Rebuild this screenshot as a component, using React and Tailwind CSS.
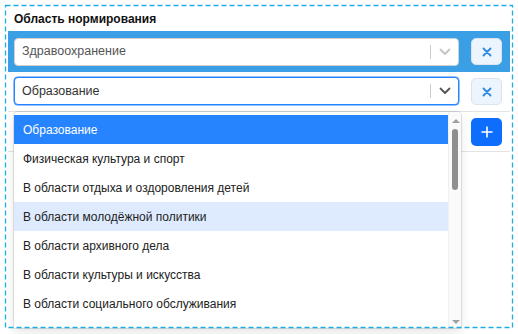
import React from "react";

function Chevron({ color }) {
  return (
    <svg width="12" height="8" viewBox="0 0 12 8" fill="none">
      <path d="M1.5 1.5 L6 6 L10.5 1.5" stroke={color} strokeWidth="1.8" strokeLinecap="round" strokeLinejoin="round" />
    </svg>
  );
}

function Select({ value, focused }) {
  return (
    <div
      className={
        "flex h-[28px] w-[445px] items-center rounded-[4px] border bg-white " +
        (focused ? "border-[#2684ff] shadow-[0_0_0_0.5px_#2684ff]" : "border-[#d0d0d0]")
      }
    >
      <div className={"flex-1 pl-[7px] " + (focused ? "text-[#333]" : "text-[#555]")}>{value}</div>
      <div className="h-[14px] w-px bg-[#cccccc]" />
      <div className="flex w-[27px] items-center justify-center">
        <Chevron color={focused ? "#555555" : "#c4c4c4"} />
      </div>
    </div>
  );
}

function XButton() {
  return (
    <div className="flex h-[27px] w-[31px] items-center justify-center rounded-[5px] border border-[#dbe4ec] bg-[#ecf4fd]">
      <svg width="10" height="10" viewBox="0 0 10 10">
        <path d="M1.5 1.5 L8.5 8.5 M8.5 1.5 L1.5 8.5" stroke="#2d88e0" strokeWidth="1.8" strokeLinecap="round" />
      </svg>
    </div>
  );
}

const items = [
  "Образование",
  "Физическая культура и спорт",
  "В области отдыха и оздоровления детей",
  "В области молодёжной политики",
  "В области архивного дела",
  "В области культуры и искусства",
  "В области социального обслуживания",
];

export default function App() {
  return (
    <div className="relative h-[334px] w-[518px] overflow-hidden bg-white font-['Liberation_Sans',Arial,sans-serif] text-[12.5px] text-[#212529]">
      <div className="px-[8px] pt-[9px]">
        <div className="flex h-[22px] items-center pb-[3px] pl-[6px] text-[12px] font-bold text-[#111]">Область нормирования</div>
        <div className="flex h-[41px] items-center gap-[12px] bg-[#3a9fe5] pl-[6px] pr-[8px]">
          <Select value="Здравоохранение" />
          <XButton />
        </div>
        <div className="flex h-[40px] items-start gap-[12px] border-b border-[#e3e3e3] pl-[6px] pr-[8px] pt-[5px]">
          <Select value="Образование" focused />
          <div className="pt-[1px]">
            <XButton />
          </div>
        </div>
        <div className="flex h-[40px] items-center justify-end border-b border-[#e3e3e3] pr-[8px]">
          <div className="flex h-[28px] w-[31px] items-center justify-center rounded-[5px] bg-[#0d6efd]">
            <svg width="12" height="12" viewBox="0 0 12 12">
              <path d="M6 1 V11 M1 6 H11" stroke="#fff" strokeWidth="1.6" strokeLinecap="round" />
            </svg>
          </div>
        </div>
      </div>

      {/* dropdown menu */}
      <div className="absolute left-[14px] top-[112px] z-10 flex h-[216px] w-[447px] overflow-hidden rounded-t-[4px] bg-white shadow-[0_0_0_1px_rgba(0,0,0,0.1),0_4px_11px_rgba(0,0,0,0.1)]">
        <div className="flex-1 pt-[3px]">
          {items.map((t, i) => (
            <div
              key={t}
              className={
                "flex h-[29px] items-center pl-[9px] pt-[1px] text-[12px] " +
                (i === 0 ? "bg-[#2684ff] text-white" : i === 3 ? "bg-[#deebff] text-[#222]" : "text-[#222]")
              }
            >
              {t}
            </div>
          ))}
        </div>
        <div className="relative w-[13px] border-l border-[#f0f0f0] bg-[#fafafa]">
          <div className="absolute left-[2.5px] top-[7px] h-0 w-0 border-x-[4px] border-b-[4px] border-x-transparent border-b-[#a0a0a0]" />
          <div className="absolute left-[3px] top-[17px] h-[61px] w-[6px] rounded-[3px] bg-[#8f8f8f]" />
          <div className="absolute bottom-[4px] left-[2.5px] h-0 w-0 border-x-[4px] border-t-[4px] border-x-transparent border-t-[#a0a0a0]" />
        </div>
      </div>

      {/* dashed outline */}
      <svg className="pointer-events-none absolute left-0 top-0 z-20" width="518" height="334">
        <rect x="5.5" y="5.5" width="507" height="322" fill="none" stroke="#1aaee8" strokeWidth="1.3" strokeDasharray="5 3" />
      </svg>
    </div>
  );
}
